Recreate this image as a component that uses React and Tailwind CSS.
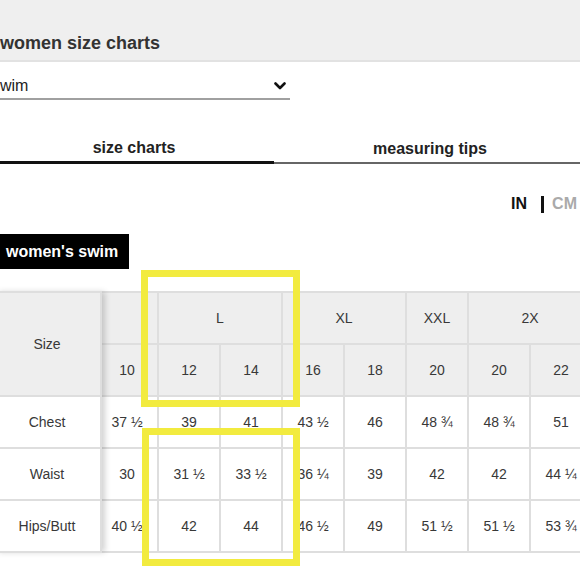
import React from "react";

const sizes = ["10", "12", "14", "16", "18", "20", "20", "22"];

const rows = [
  { label: "Chest", values: ["37 ½", "39", "41", "43 ½", "46", "48 ¾", "48 ¾", "51"] },
  { label: "Waist", values: ["30", "31 ½", "33 ½", "36 ¼", "39", "42", "42", "44 ¼"] },
  { label: "Hips/Butt", values: ["40 ½", "42", "44", "46 ½", "49", "51 ½", "51 ½", "53 ¾"] },
];

function Chevron() {
  return (
    <svg width="12" height="8" viewBox="0 0 12 8" fill="none">
      <path d="M1.5 1.5L6 6L10.5 1.5" stroke="#111" strokeWidth="2.6" strokeLinecap="round" strokeLinejoin="round" />
    </svg>
  );
}

export default function App() {
  return (
    <div
      className="relative w-[580px] h-[580px] overflow-hidden bg-white text-[#333]"
      style={{ fontFamily: '"Liberation Sans", Arial, sans-serif' }}
    >
      <div className="-ml-[6px] w-[592px]">
        {/* header */}
        <div className="h-[62px] bg-[#efefef] border-b-2 border-[#e2e2e2] pl-[6px] pt-[31px]">
          <div className="text-[18px] leading-[24px] font-bold text-[#333]">women size charts</div>
        </div>

        {/* category select */}
        <div className="mt-[14px] w-[296px] flex items-center justify-between border-b-2 border-[#a0a0a0] pb-[2px] pr-[4px]">
          <span className="-ml-[2px] text-[16px] leading-[20px] text-[#222]">swim</span>
          <Chevron />
        </div>

        {/* tabs */}
        <div className="mt-[38px] flex items-end">
          <div className="w-[280px] text-center text-[16px] leading-[20px] font-bold text-[#222] pb-[3px] border-b-[3px] border-[#111]">
            size charts
          </div>
          <div className="flex-1 text-center text-[16px] leading-[20px] font-bold text-[#222] pb-[3px] border-b-2 border-[#666]">
            measuring tips
          </div>
        </div>

        {/* units */}
        <div className="mt-[30px] flex items-center justify-end pr-[9px] text-[16px] leading-[20px] font-bold">
          <span className="text-[#111]">IN</span>
          <span className="ml-[14px] mr-[8px] w-[3px] h-[17px] bg-[#111]" />
          <span className="text-[#aaa]">CM</span>
        </div>

        {/* chart title */}
        <div className="mt-[20px] inline-flex h-[35px] items-center bg-black pl-[12px] pr-[11px] text-[16px] font-bold text-white">
          women's swim
        </div>

        {/* table */}
        <div className="mt-[22px] flex text-[14px] text-[#383838]">
          <div className="relative z-10 w-[108px] shrink-0 grid grid-rows-[50px_50px_50px_50px_50px] gap-[2px] bg-[#dedede] py-[2px] pr-[2px] shadow-[4px_0_6px_-1px_rgba(0,0,0,0.18)]">
            <div className="row-span-2 flex items-center justify-center bg-[#eeeeee]">Size</div>
            {rows.map((r) => (
              <div key={r.label} className="flex items-center justify-center bg-white">
                {r.label}
              </div>
            ))}
          </div>

          <div className="flex-1 overflow-hidden">
            <div className="-ml-[5px] w-[496px] grid grid-cols-[repeat(8,60px)] grid-rows-[50px_50px_50px_50px_50px] gap-[2px] bg-[#dedede] py-[2px]">
              <div className="bg-[#eeeeee]" />
              <div className="col-span-2 flex items-center justify-center bg-[#eeeeee]">L</div>
              <div className="col-span-2 flex items-center justify-center bg-[#eeeeee]">XL</div>
              <div className="flex items-center justify-center bg-[#eeeeee]">XXL</div>
              <div className="col-span-2 flex items-center justify-center bg-[#eeeeee]">2X</div>
              {sizes.map((s, i) => (
                <div key={"s" + i} className="flex items-center justify-center bg-[#eeeeee]">
                  {s}
                </div>
              ))}
              {rows.map((r) =>
                r.values.map((v, i) => (
                  <div key={r.label + i} className="flex items-center justify-center bg-white">
                    {v}
                  </div>
                ))
              )}
            </div>
          </div>
        </div>
      </div>

      {/* highlight annotations */}
      <div className="absolute left-[141px] top-[270px] w-[159px] h-[137px] border-[7px] border-[#f2eb3f] z-20" />
      <div className="absolute left-[142px] top-[428px] w-[158px] h-[138px] border-[7px] border-[#f2eb3f] z-20" />
    </div>
  );
}
